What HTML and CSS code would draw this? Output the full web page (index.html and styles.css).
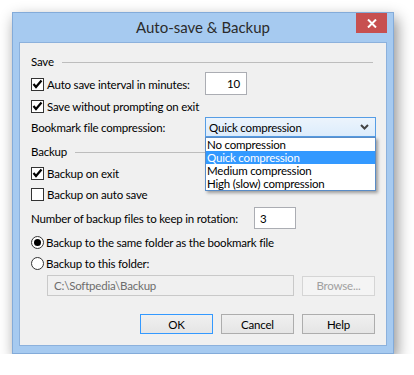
FILE: index.html
```html
<!DOCTYPE html>
<html>
<head>
<meta charset="utf-8">
<title>Auto-save &amp; Backup</title>
<link rel="stylesheet" href="styles.css">
</head>
<body>
<div class="stage">
  <div class="window">
    <div class="titlebar">
      <span></span>
      <div class="title">Auto-save &amp; Backup</div>
      <div class="close">
        <svg width="10" height="9" viewBox="0 0 10 9"><path d="M1 0.5L9 8.5M9 0.5L1 8.5" stroke="#fff" stroke-width="2" fill="none"/></svg>
      </div>
    </div>
    <div class="client">
      <div class="group-head"><span>Save</span><i class="rule"></i></div>

      <div class="row row-interval">
        <div class="check label-wide">
          <span class="box"><svg width="11" height="11" viewBox="0 0 11 11"><path d="M1.5 5L4 8L9.5 1.5" stroke="#000" stroke-width="2.2" fill="none"/></svg></span>
          <span>Auto save interval in minutes:</span>
        </div>
        <div class="textbox tb-interval">10</div>
      </div>

      <div class="row row-noprompt">
        <div class="check">
          <span class="box"><svg width="11" height="11" viewBox="0 0 11 11"><path d="M1.5 5L4 8L9.5 1.5" stroke="#000" stroke-width="2.2" fill="none"/></svg></span>
          <span>Save without prompting on exit</span>
        </div>
      </div>

      <div class="row row-compress">
        <div class="label-wide">Bookmark file compression:</div>
        <div class="combo">
          <span>Quick compression</span>
          <svg class="chev" width="9" height="6" viewBox="0 0 9 6"><path d="M1 1L4.5 4.5L8 1" stroke="#444" stroke-width="2" fill="none"/></svg>
          <ul class="droplist">
            <li>No compression</li>
            <li class="sel">Quick compression</li>
            <li>Medium compression</li>
            <li>High (slow) compression</li>
          </ul>
        </div>
      </div>

      <div class="group-head gh-backup"><span>Backup</span><i class="rule"></i></div>

      <div class="row row-exit">
        <div class="check">
          <span class="box"><svg width="11" height="11" viewBox="0 0 11 11"><path d="M1.5 5L4 8L9.5 1.5" stroke="#000" stroke-width="2.2" fill="none"/></svg></span>
          <span>Backup on exit</span>
        </div>
      </div>

      <div class="row row-auto">
        <div class="check">
          <span class="box"></span>
          <span>Backup on auto save</span>
        </div>
      </div>

      <div class="row row-count">
        <div class="label-count">Number of backup files to keep in rotation:</div>
        <div class="textbox tb-count">3</div>
      </div>

      <div class="row row-radio1">
        <div class="check">
          <span class="radio on"><i></i></span>
          <span>Backup to the same folder as the bookmark file</span>
        </div>
      </div>

      <div class="row row-radio2">
        <div class="check">
          <span class="radio"></span>
          <span>Backup to this folder:</span>
        </div>
      </div>

      <div class="row row-path">
        <div class="textbox tb-path">C:\Softpedia\Backup</div>
        <div class="btn btn-disabled">Browse...</div>
      </div>

      <div class="buttons">
        <div class="btn btn-default">OK</div>
        <div class="btn">Cancel</div>
        <div class="btn">Help</div>
      </div>
    </div>
  </div>
</div>
</body>
</html>
```

FILE: styles.css
```css
html, body {
  margin: 0;
  background: #ffffff;
}
body {
  font-family: Lato, "Noto Sans", sans-serif;
  font-size: 11.5px;
  letter-spacing: -0.2px;
  color: #000;
}
.stage {
  padding: 12px 0 0 12px;
}
.window {
  width: 382px;
  height: 342px;
  box-sizing: border-box;
  border: 1px solid #83abd9;
  background: #a6caf0;
  padding: 0 6px 7px;
  display: flex;
  flex-direction: column;
  box-shadow: 3px 6px 14px rgba(0, 0, 0, 0.45);
}
.titlebar {
  height: 29px;
  flex: none;
  display: grid;
  grid-template-columns: 1fr auto 1fr;
}
.title {
  font-size: 15px;
  letter-spacing: 0;
  line-height: 28px;
  color: #2b2b2b;
  white-space: nowrap;
}
.close {
  justify-self: end;
  align-self: start;
  width: 31px;
  height: 20px;
  background: #c75050;
  display: flex;
  align-items: center;
  justify-content: center;
}
.client {
  flex: 1;
  border: 1px solid #8cb1dc;
  background: #f0f0f0;
  padding: 12px 10px 11px 11px;
  display: flex;
  flex-direction: column;
}
.group-head {
  height: 14px;
  display: flex;
  align-items: center;
  line-height: 14px;
}
.group-head .rule {
  flex: 1;
  height: 0;
  border-top: 1px solid #bdbdbd;
  margin: 1px 3px 0 8px;
}
.gh-backup { margin-top: 8px; }
.row {
  display: flex;
  align-items: center;
  white-space: nowrap;
}
.row-interval { height: 24px; margin-top: 3px; }
.row-noprompt { height: 18px; margin-top: 1px; }
.row-compress { height: 20px; margin-top: 2px; }
.row-exit { height: 18px; margin-top: 5px; }
.row-auto { height: 18px; margin-top: 3px; }
.row-count { height: 22px; margin-top: 4px; }
.row-radio1 { height: 18px; margin-top: 4px; }
.row-radio2 { height: 18px; margin-top: 3px; }
.row-path { height: 21px; margin-top: 3px; padding-left: 16px; gap: 8px; }

.check {
  display: flex;
  align-items: center;
}
.label-wide { width: 174px; flex: none; }
.label-count { width: 223px; flex: none; }

.box {
  width: 13px;
  height: 13px;
  box-sizing: border-box;
  border: 1px solid #333;
  background: #fff;
  margin-right: 3px;
  display: flex;
  align-items: center;
  justify-content: center;
  flex: none;
}
.radio {
  width: 13px;
  height: 13px;
  box-sizing: border-box;
  border: 1px solid #333;
  border-radius: 50%;
  background: #fff;
  margin-right: 2px;
  display: flex;
  align-items: center;
  justify-content: center;
  flex: none;
}
.radio i {
  width: 7px;
  height: 7px;
  border-radius: 50%;
  background: #000;
}

.textbox {
  box-sizing: border-box;
  border: 1px solid #abadb3;
  background: #fff;
  display: flex;
  align-items: center;
  flex: none;
}
.tb-interval {
  width: 42px;
  height: 23px;
  align-self: flex-start;
  justify-content: flex-end;
  padding-right: 6px;
}
.tb-count {
  width: 42px;
  height: 22px;
  padding-left: 5px;
}
.tb-path {
  width: 247px;
  height: 21px;
  background: #f0f0f0;
  border-color: #c9c9c9;
  color: #6d6d6d;
  padding-left: 6px;
}

.combo {
  position: relative;
  width: 171px;
  height: 20px;
  box-sizing: border-box;
  border: 1px solid #569de5;
  background: linear-gradient(#ecf4fc, #dcecfc);
  display: flex;
  align-items: center;
  padding: 0 4px 0 3px;
  flex: none;
}
.combo span { flex: 1; }
.chev { margin-right: 2px; }
.droplist {
  position: absolute;
  top: 19px;
  left: -1px;
  width: 171px;
  box-sizing: border-box;
  margin: 0;
  padding: 0;
  list-style: none;
  background: #fff;
  border: 1px solid #5a8cc6;
  box-shadow: 2px 2px 3px rgba(0, 0, 0, 0.35);
  z-index: 2;
}
.droplist li {
  height: 13px;
  line-height: 13px;
  padding-left: 1px;
}
.droplist li.sel {
  background: #3399ff;
  color: #fff;
}

.btn {
  width: 73px;
  height: 20px;
  box-sizing: border-box;
  border: 1px solid #adadad;
  background: linear-gradient(#f0f0f0, #e5e5e5);
  display: flex;
  align-items: center;
  justify-content: center;
  flex: none;
}
.btn-default {
  border-color: #3399ff;
}
.btn-disabled {
  border-color: #d5d5d5;
  background: #f4f4f4;
  color: #a0a0a0;
}
.buttons {
  margin-top: auto;
  display: flex;
  justify-content: flex-end;
  gap: 8px;
  padding-right: 1px;
}
```
